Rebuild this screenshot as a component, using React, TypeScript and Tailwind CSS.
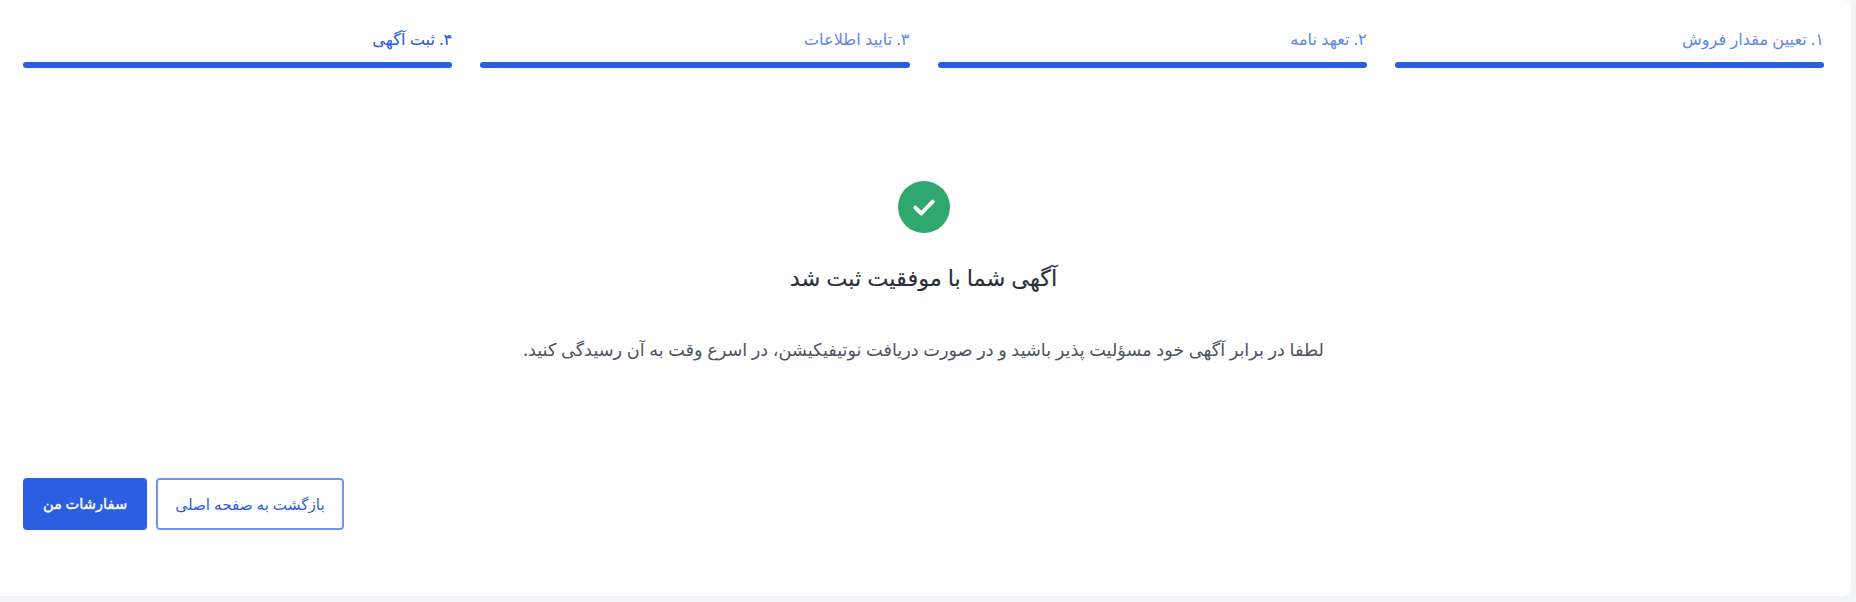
const steps = ["۱. تعیین مقدار فروش", "۲. تعهد نامه", "۳. تایید اطلاعات", "۴. ثبت آگهی"];

export default function App() {
  return (
    <div dir="rtl" className="h-[602px] bg-[#f3f4f8] pr-[5px] pb-[6px] overflow-hidden font-['Noto_Sans','DejaVu_Sans',sans-serif]">
      <div className="h-full bg-white rounded-r-lg flex flex-col pt-[28px] pr-[27px] pl-[23px] pb-[66px]">
        {/* steps */}
        <div className="grid grid-cols-4 gap-x-[28px]">
          {steps.map((step, i) => (
            <div key={step}>
              <div className={`text-[16.2px] leading-[22px] text-[#2b5ee0] ${i === 3 ? "[-webkit-text-stroke:0.1px_#2b5ee0]" : "opacity-75"}`}>{step}</div>
              <div className="h-[6px] mt-[12px] rounded-full bg-[#2b5ee0]" />
            </div>
          ))}
        </div>

        {/* success message */}
        <div className="flex-1 flex flex-col items-center pt-[113px]">
          <div className="w-[52px] h-[52px] rounded-full bg-[#2ea86f] flex items-center justify-center mr-[-1px]">
            <svg className="w-[26px] h-[26px]" viewBox="0 0 24 24" fill="none" stroke="white" strokeWidth="3.6" strokeLinecap="round" strokeLinejoin="round">
              <path d="M4 12.5l5.5 5.5L20 7" />
            </svg>
          </div>
          <h1 className="mt-[30px] text-[22.5px] leading-[30px] text-[#2a2f3a] [-webkit-text-stroke:0.15px_#2a2f3a]">آگهی شما با موفقیت ثبت شد</h1>
          <p className="mt-[43px] text-[17.7px] leading-[26px] text-[#4f5460]">
            لطفا در برابر آگهی خود مسؤلیت پذیر باشید و در صورت دریافت نوتیفیکیشن، در اسرع وقت به آن رسیدگی کنید.
          </p>
        </div>

        {/* actions */}
        <div className="flex justify-end gap-[9px]">
          <button className="h-[52px] w-[188px] rounded-[4px] border-2 border-[#7396ec] bg-white text-[15.2px] text-[#2b5ee0]">بازگشت به صفحه اصلی</button>
          <button className="h-[52px] w-[124px] rounded-[4px] bg-[#2b5ee0] text-[14.6px] text-white [-webkit-text-stroke:0.4px_white]">سفارشات من</button>
        </div>
      </div>
    </div>
  );
}
